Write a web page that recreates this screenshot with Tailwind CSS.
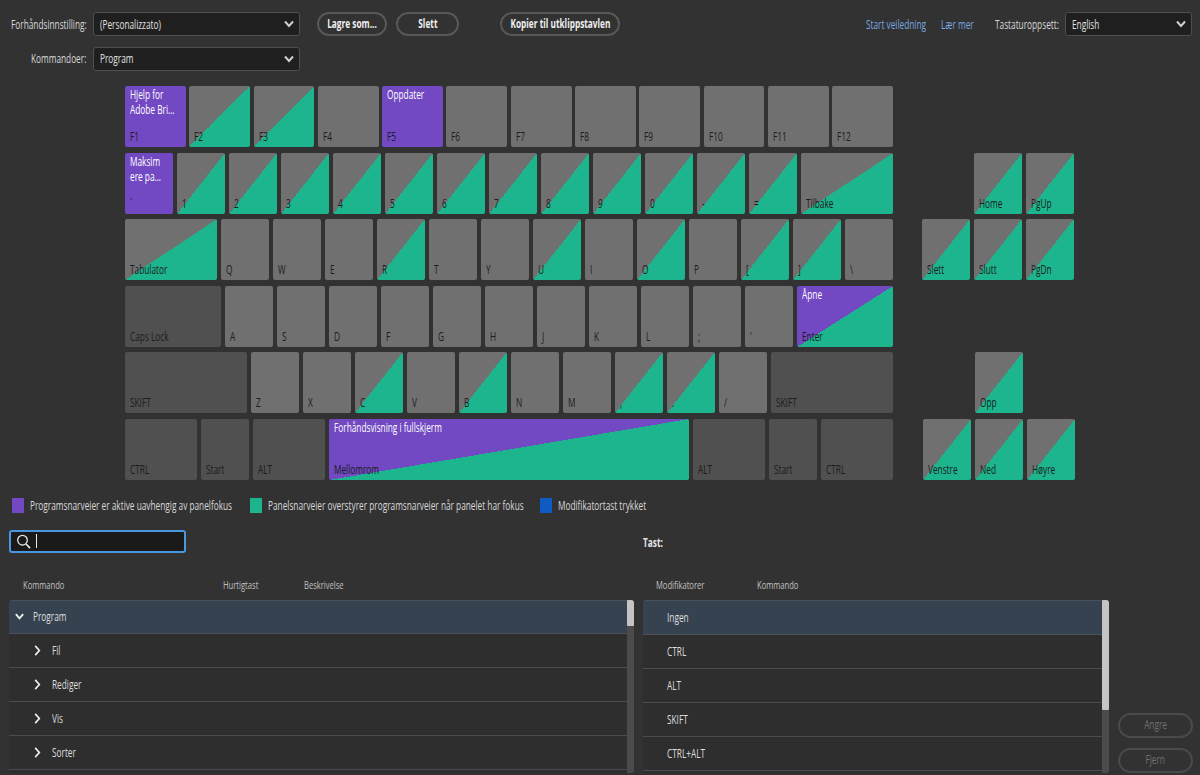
<!DOCTYPE html>
<html lang="no">
<head>
<meta charset="utf-8">
<title>Hurtigtaster</title>
<script src="https://cdn.jsdelivr.net/npm/@tailwindcss/browser@4"></script>
</head>
<body class="bg-[#323232]">
<!-- every label is a span: the UI font is very condensed, so spans get squeezed horizontally here -->
<div class="w-[1200px] h-[775px] overflow-hidden bg-[#323232] pt-3 text-[12px] leading-4 text-[#d8d8d8] font-['Open_Sans',sans-serif] [&_span]:inline-block [&_span]:origin-left [&_span]:scale-x-[.69] [&_span]:whitespace-nowrap">

  <!-- Top controls -->
  <div class="flex items-center h-6">
    <div class="w-[93px] pl-[11px] pt-[2px]"><span>Forhåndsinnstilling:</span></div>
    <div class="w-[207px] h-6 flex items-center justify-between pl-[6px] pr-1 bg-[#1f1f1f] border border-[#4f4f4f] rounded-[3px] text-[#e0e0e0]">
      <span class="mt-[2px]">(Personalizzato)</span>
      <svg class="w-3 h-3" viewBox="0 0 12 12" fill="none" stroke="#d0d0d0" stroke-width="2"><path d="M2 3.5l4 4.5 4-4.5"/></svg>
    </div>
    <button class="ml-[17px] w-[70px] h-6 flex items-center justify-center border-2 border-[#585858] rounded-full font-bold text-[#efefef]"><span class="!origin-center">Lagre som...</span></button>
    <button class="ml-[9px] w-[63px] h-6 flex items-center justify-center border-2 border-[#585858] rounded-full font-bold text-[#efefef]"><span class="!origin-center">Slett</span></button>
    <button class="ml-[41px] w-[120px] h-6 flex items-center justify-center border-2 border-[#585858] rounded-full font-bold text-[#efefef]"><span class="!origin-center">Kopier til utklippstavlen</span></button>
    <div class="ml-[246px] w-[60px] pt-[2px] text-[#78a8e0]"><span>Start veiledning</span></div>
    <div class="ml-[15px] w-[34px] pt-[2px] text-[#78a8e0]"><span>Lær mer</span></div>
    <div class="ml-5 w-[62px] pt-[2px]"><span>Tastaturoppsett:</span></div>
    <div class="ml-2 w-[127px] h-6 flex items-center justify-between pl-[6px] pr-1 bg-[#1f1f1f] border border-[#4f4f4f] rounded-[3px] text-[#e0e0e0]">
      <span class="mt-[2px]">English</span>
      <svg class="w-3 h-3" viewBox="0 0 12 12" fill="none" stroke="#d0d0d0" stroke-width="2"><path d="M2 3.5l4 4.5 4-4.5"/></svg>
    </div>
  </div>
  <div class="flex items-center h-6 mt-[11px]">
    <div class="w-[93px] pl-[31px]"><span>Kommandoer:</span></div>
    <div class="w-[207px] h-6 flex items-center justify-between pl-[6px] pr-1 bg-[#1f1f1f] border border-[#4f4f4f] rounded-[3px] text-[#e0e0e0]">
      <span>Program</span>
      <svg class="w-3 h-3" viewBox="0 0 12 12" fill="none" stroke="#d0d0d0" stroke-width="2"><path d="M2 3.5l4 4.5 4-4.5"/></svg>
    </div>
  </div>

  <!-- Keyboard -->
  <div class="mt-[15px] pl-[125px] flex flex-col gap-[5.6px] text-[#1c1c1c]">
    <div class="flex gap-[3.5px] h-[61px] w-[768px]">
      <div class="w-[60.8px] rounded-[2px] bg-[#7249c2] flex flex-col justify-between px-[5px] pt-[1px] pb-[2px]"><span class="text-white leading-[15px]">Hjelp for<br>Adobe Bri...</span><span>F1</span></div>
      <div class="w-[60.8px] rounded-[2px] bg-[linear-gradient(to_bottom_right,#707070_50%,#1db58e_50%)] flex items-end px-[5px] pb-[2px]"><span>F2</span></div>
      <div class="w-[60.8px] rounded-[2px] bg-[linear-gradient(to_bottom_right,#707070_50%,#1db58e_50%)] flex items-end px-[5px] pb-[2px]"><span>F3</span></div>
      <div class="w-[60.8px] rounded-[2px] bg-[#707070] flex items-end px-[5px] pb-[2px]"><span>F4</span></div>
      <div class="w-[60.8px] rounded-[2px] bg-[#7249c2] flex flex-col justify-between px-[5px] pt-[1px] pb-[2px]"><span class="text-white leading-[15px]">Oppdater</span><span>F5</span></div>
      <div class="w-[60.8px] rounded-[2px] bg-[#707070] flex items-end px-[5px] pb-[2px]"><span>F6</span></div>
      <div class="w-[60.8px] rounded-[2px] bg-[#707070] flex items-end px-[5px] pb-[2px]"><span>F7</span></div>
      <div class="w-[60.8px] rounded-[2px] bg-[#707070] flex items-end px-[5px] pb-[2px]"><span>F8</span></div>
      <div class="w-[60.8px] rounded-[2px] bg-[#707070] flex items-end px-[5px] pb-[2px]"><span>F9</span></div>
      <div class="w-[60.8px] rounded-[2px] bg-[#707070] flex items-end px-[5px] pb-[2px]"><span>F10</span></div>
      <div class="w-[60.8px] rounded-[2px] bg-[#707070] flex items-end px-[5px] pb-[2px]"><span>F11</span></div>
      <div class="w-[60.8px] rounded-[2px] bg-[#707070] flex items-end px-[5px] pb-[2px]"><span>F12</span></div>
    </div>
    <div class="flex gap-1 h-[61px]">
      <div class="w-12 rounded-[2px] bg-[#7249c2] flex flex-col justify-between px-[5px] pt-[1px] pb-[2px]"><span class="text-white leading-[15px]">Maksim<br>ere pa...</span><span>`</span></div>
      <div class="w-12 rounded-[2px] bg-[linear-gradient(to_bottom_right,#707070_50%,#1db58e_50%)] flex items-end px-[5px] pb-[2px]"><span>1</span></div>
      <div class="w-12 rounded-[2px] bg-[linear-gradient(to_bottom_right,#707070_50%,#1db58e_50%)] flex items-end px-[5px] pb-[2px]"><span>2</span></div>
      <div class="w-12 rounded-[2px] bg-[linear-gradient(to_bottom_right,#707070_50%,#1db58e_50%)] flex items-end px-[5px] pb-[2px]"><span>3</span></div>
      <div class="w-12 rounded-[2px] bg-[linear-gradient(to_bottom_right,#707070_50%,#1db58e_50%)] flex items-end px-[5px] pb-[2px]"><span>4</span></div>
      <div class="w-12 rounded-[2px] bg-[linear-gradient(to_bottom_right,#707070_50%,#1db58e_50%)] flex items-end px-[5px] pb-[2px]"><span>5</span></div>
      <div class="w-12 rounded-[2px] bg-[linear-gradient(to_bottom_right,#707070_50%,#1db58e_50%)] flex items-end px-[5px] pb-[2px]"><span>6</span></div>
      <div class="w-12 rounded-[2px] bg-[linear-gradient(to_bottom_right,#707070_50%,#1db58e_50%)] flex items-end px-[5px] pb-[2px]"><span>7</span></div>
      <div class="w-12 rounded-[2px] bg-[linear-gradient(to_bottom_right,#707070_50%,#1db58e_50%)] flex items-end px-[5px] pb-[2px]"><span>8</span></div>
      <div class="w-12 rounded-[2px] bg-[linear-gradient(to_bottom_right,#707070_50%,#1db58e_50%)] flex items-end px-[5px] pb-[2px]"><span>9</span></div>
      <div class="w-12 rounded-[2px] bg-[linear-gradient(to_bottom_right,#707070_50%,#1db58e_50%)] flex items-end px-[5px] pb-[2px]"><span>0</span></div>
      <div class="w-12 rounded-[2px] bg-[linear-gradient(to_bottom_right,#707070_50%,#1db58e_50%)] flex items-end px-[5px] pb-[2px]"><span>-</span></div>
      <div class="w-12 rounded-[2px] bg-[linear-gradient(to_bottom_right,#707070_50%,#1db58e_50%)] flex items-end px-[5px] pb-[2px]"><span>=</span></div>
      <div class="w-[92px] rounded-[2px] bg-[linear-gradient(to_bottom_right,#707070_50%,#1db58e_50%)] flex items-end px-[5px] pb-[2px]"><span>Tilbake</span></div>
      <div class="ml-[77px] w-12 rounded-[2px] bg-[linear-gradient(to_bottom_right,#707070_50%,#1db58e_50%)] flex items-end px-[5px] pb-[2px]"><span>Home</span></div>
      <div class="w-12 rounded-[2px] bg-[linear-gradient(to_bottom_right,#707070_50%,#1db58e_50%)] flex items-end px-[5px] pb-[2px]"><span>PgUp</span></div>
    </div>
    <div class="flex gap-1 h-[61px]">
      <div class="w-[92px] rounded-[2px] bg-[linear-gradient(to_bottom_right,#707070_50%,#1db58e_50%)] flex items-end px-[5px] pb-[2px]"><span>Tabulator</span></div>
      <div class="w-12 rounded-[2px] bg-[#707070] flex items-end px-[5px] pb-[2px]"><span>Q</span></div>
      <div class="w-12 rounded-[2px] bg-[#707070] flex items-end px-[5px] pb-[2px]"><span>W</span></div>
      <div class="w-12 rounded-[2px] bg-[#707070] flex items-end px-[5px] pb-[2px]"><span>E</span></div>
      <div class="w-12 rounded-[2px] bg-[linear-gradient(to_bottom_right,#707070_50%,#1db58e_50%)] flex items-end px-[5px] pb-[2px]"><span>R</span></div>
      <div class="w-12 rounded-[2px] bg-[#707070] flex items-end px-[5px] pb-[2px]"><span>T</span></div>
      <div class="w-12 rounded-[2px] bg-[#707070] flex items-end px-[5px] pb-[2px]"><span>Y</span></div>
      <div class="w-12 rounded-[2px] bg-[linear-gradient(to_bottom_right,#707070_50%,#1db58e_50%)] flex items-end px-[5px] pb-[2px]"><span>U</span></div>
      <div class="w-12 rounded-[2px] bg-[#707070] flex items-end px-[5px] pb-[2px]"><span>I</span></div>
      <div class="w-12 rounded-[2px] bg-[linear-gradient(to_bottom_right,#707070_50%,#1db58e_50%)] flex items-end px-[5px] pb-[2px]"><span>O</span></div>
      <div class="w-12 rounded-[2px] bg-[#707070] flex items-end px-[5px] pb-[2px]"><span>P</span></div>
      <div class="w-12 rounded-[2px] bg-[linear-gradient(to_bottom_right,#707070_50%,#1db58e_50%)] flex items-end px-[5px] pb-[2px]"><span>[</span></div>
      <div class="w-12 rounded-[2px] bg-[linear-gradient(to_bottom_right,#707070_50%,#1db58e_50%)] flex items-end px-[5px] pb-[2px]"><span>]</span></div>
      <div class="w-12 rounded-[2px] bg-[#707070] flex items-end px-[5px] pb-[2px]"><span>\</span></div>
      <div class="ml-[25px] w-12 rounded-[2px] bg-[linear-gradient(to_bottom_right,#707070_50%,#1db58e_50%)] flex items-end px-[5px] pb-[2px]"><span>Slett</span></div>
      <div class="w-12 rounded-[2px] bg-[linear-gradient(to_bottom_right,#707070_50%,#1db58e_50%)] flex items-end px-[5px] pb-[2px]"><span>Slutt</span></div>
      <div class="w-12 rounded-[2px] bg-[linear-gradient(to_bottom_right,#707070_50%,#1db58e_50%)] flex items-end px-[5px] pb-[2px]"><span>PgDn</span></div>
    </div>
    <div class="flex gap-1 h-[61px]">
      <div class="w-24 rounded-[2px] bg-[#505050] flex items-end px-[5px] pb-[2px]"><span>Caps Lock</span></div>
      <div class="w-12 rounded-[2px] bg-[#707070] flex items-end px-[5px] pb-[2px]"><span>A</span></div>
      <div class="w-12 rounded-[2px] bg-[#707070] flex items-end px-[5px] pb-[2px]"><span>S</span></div>
      <div class="w-12 rounded-[2px] bg-[#707070] flex items-end px-[5px] pb-[2px]"><span>D</span></div>
      <div class="w-12 rounded-[2px] bg-[#707070] flex items-end px-[5px] pb-[2px]"><span>F</span></div>
      <div class="w-12 rounded-[2px] bg-[#707070] flex items-end px-[5px] pb-[2px]"><span>G</span></div>
      <div class="w-12 rounded-[2px] bg-[#707070] flex items-end px-[5px] pb-[2px]"><span>H</span></div>
      <div class="w-12 rounded-[2px] bg-[#707070] flex items-end px-[5px] pb-[2px]"><span>J</span></div>
      <div class="w-12 rounded-[2px] bg-[#707070] flex items-end px-[5px] pb-[2px]"><span>K</span></div>
      <div class="w-12 rounded-[2px] bg-[#707070] flex items-end px-[5px] pb-[2px]"><span>L</span></div>
      <div class="w-12 rounded-[2px] bg-[#707070] flex items-end px-[5px] pb-[2px]"><span>;</span></div>
      <div class="w-12 rounded-[2px] bg-[#707070] flex items-end px-[5px] pb-[2px]"><span>'</span></div>
      <div class="w-24 rounded-[2px] bg-[linear-gradient(to_bottom_right,#7249c2_50%,#1db58e_50%)] flex flex-col justify-between px-[5px] pt-[1px] pb-[2px]"><span class="text-white leading-[15px]">Åpne</span><span>Enter</span></div>
    </div>
    <div class="flex gap-1 h-[61px]">
      <div class="w-[122px] rounded-[2px] bg-[#505050] flex items-end px-[5px] pb-[2px]"><span>SKIFT</span></div>
      <div class="w-12 rounded-[2px] bg-[#707070] flex items-end px-[5px] pb-[2px]"><span>Z</span></div>
      <div class="w-12 rounded-[2px] bg-[#707070] flex items-end px-[5px] pb-[2px]"><span>X</span></div>
      <div class="w-12 rounded-[2px] bg-[linear-gradient(to_bottom_right,#707070_50%,#1db58e_50%)] flex items-end px-[5px] pb-[2px]"><span>C</span></div>
      <div class="w-12 rounded-[2px] bg-[#707070] flex items-end px-[5px] pb-[2px]"><span>V</span></div>
      <div class="w-12 rounded-[2px] bg-[linear-gradient(to_bottom_right,#707070_50%,#1db58e_50%)] flex items-end px-[5px] pb-[2px]"><span>B</span></div>
      <div class="w-12 rounded-[2px] bg-[#707070] flex items-end px-[5px] pb-[2px]"><span>N</span></div>
      <div class="w-12 rounded-[2px] bg-[#707070] flex items-end px-[5px] pb-[2px]"><span>M</span></div>
      <div class="w-12 rounded-[2px] bg-[linear-gradient(to_bottom_right,#707070_50%,#1db58e_50%)] flex items-end px-[5px] pb-[2px]"><span>,</span></div>
      <div class="w-12 rounded-[2px] bg-[linear-gradient(to_bottom_right,#707070_50%,#1db58e_50%)] flex items-end px-[5px] pb-[2px]"><span>.</span></div>
      <div class="w-12 rounded-[2px] bg-[#707070] flex items-end px-[5px] pb-[2px]"><span>/</span></div>
      <div class="w-[122px] rounded-[2px] bg-[#505050] flex items-end px-[5px] pb-[2px]"><span>SKIFT</span></div>
      <div class="ml-[78px] w-12 rounded-[2px] bg-[linear-gradient(to_bottom_right,#707070_50%,#1db58e_50%)] flex items-end px-[5px] pb-[2px]"><span>Opp</span></div>
    </div>
    <div class="flex gap-1 h-[61px]">
      <div class="w-[72px] rounded-[2px] bg-[#505050] flex items-end px-[5px] pb-[2px]"><span>CTRL</span></div>
      <div class="w-12 rounded-[2px] bg-[#505050] flex items-end px-[5px] pb-[2px]"><span>Start</span></div>
      <div class="w-[72px] rounded-[2px] bg-[#505050] flex items-end px-[5px] pb-[2px]"><span>ALT</span></div>
      <div class="w-[360px] rounded-[2px] bg-[linear-gradient(to_bottom_right,#7249c2_50%,#1db58e_50%)] flex flex-col justify-between px-[5px] pt-[1px] pb-[2px]"><span class="text-white leading-[15px]">Forhåndsvisning i fullskjerm</span><span>Mellomrom</span></div>
      <div class="w-[72px] rounded-[2px] bg-[#505050] flex items-end px-[5px] pb-[2px]"><span>ALT</span></div>
      <div class="w-12 rounded-[2px] bg-[#505050] flex items-end px-[5px] pb-[2px]"><span>Start</span></div>
      <div class="w-[72px] rounded-[2px] bg-[#505050] flex items-end px-[5px] pb-[2px]"><span>CTRL</span></div>
      <div class="ml-[26px] w-12 rounded-[2px] bg-[linear-gradient(to_bottom_right,#707070_50%,#1db58e_50%)] flex items-end px-[5px] pb-[2px]"><span>Venstre</span></div>
      <div class="w-12 rounded-[2px] bg-[linear-gradient(to_bottom_right,#707070_50%,#1db58e_50%)] flex items-end px-[5px] pb-[2px]"><span>Ned</span></div>
      <div class="w-12 rounded-[2px] bg-[linear-gradient(to_bottom_right,#707070_50%,#1db58e_50%)] flex items-end px-[5px] pb-[2px]"><span>Høyre</span></div>
    </div>
  </div>

  <!-- Legend -->
  <div class="mt-[18px] pl-3 flex items-center h-[15px]">
    <div class="w-3 h-[15px] bg-[#7249c2]"></div>
    <div class="ml-[6px] w-[203px] mt-[2px]"><span>Programsnarveier er aktive uavhengig av panelfokus</span></div>
    <div class="ml-[17px] w-3 h-[15px] bg-[#1db58e]"></div>
    <div class="ml-[6px] w-[255px] mt-[2px]"><span>Panelsnarveier overstyrer programsnarveier når panelet har fokus</span></div>
    <div class="ml-[17px] w-3 h-[15px] bg-[#0f5bc4]"></div>
    <div class="ml-[6px] mt-[2px]"><span>Modifikatortast trykket</span></div>
  </div>

  <!-- Search -->
  <div class="mt-[17px] pl-[9px] flex items-center h-[23px]">
    <div class="w-[177px] h-[23px] flex items-center gap-[5px] px-[5px] bg-[#1a1a1a] border-2 border-[#4a97e0] rounded-[3px]">
      <svg class="w-[15px] h-[15px]" viewBox="0 0 15 15" fill="none" stroke="#e8e8e8" stroke-width="1.3"><circle cx="6.5" cy="6.2" r="4.8"/><path d="M10 10l4 4.2" stroke-width="1.7"/></svg>
      <div class="w-px h-[14px] bg-[#e8e8e8]"></div>
    </div>
    <div class="ml-[457px] mt-[3px] font-bold text-[#e4e4e4]"><span>Tast:</span></div>
  </div>

  <!-- Column headers -->
  <div class="mt-[24px] flex h-4 text-[#c0c0c0] text-[11px]">
    <div class="ml-[23px] w-[200px]"><span>Kommando</span></div>
    <div class="w-[81px]"><span>Hurtigtast</span></div>
    <div class="w-[352px]"><span>Beskrivelse</span></div>
    <div class="w-[101px]"><span>Modifikatorer</span></div>
    <div><span>Kommando</span></div>
  </div>

  <!-- Lists -->
  <div class="mt-[7px] flex items-start">
    <div class="ml-[9px] w-[625px] h-[173px] flex overflow-hidden rounded-[3px] bg-[#2e2e2e] text-[#dedede]">
      <div class="flex-1 border-t border-[#47525c]">
        <div class="h-[33px] flex items-center bg-[#36424f] border-b border-[#4a525a]">
          <svg class="ml-[5px] w-[11px] h-[11px]" viewBox="0 0 12 12" fill="none" stroke="#f0f0f0" stroke-width="2"><path d="M2 3.5l4 4.5 4-4.5"/></svg>
          <span class="ml-[8px] mt-[1px]">Program</span>
        </div>
        <div class="h-[34px] flex items-center border-b border-[#4c4c4c]">
          <svg class="ml-[23px] w-[11px] h-[11px]" viewBox="0 0 12 12" fill="none" stroke="#f0f0f0" stroke-width="1.8"><path d="M3.5 1l4.5 5-4.5 5"/></svg>
          <span class="ml-[9px] mt-[2px]">Fil</span>
        </div>
        <div class="h-[34px] flex items-center border-b border-[#4c4c4c]">
          <svg class="ml-[23px] w-[11px] h-[11px]" viewBox="0 0 12 12" fill="none" stroke="#f0f0f0" stroke-width="1.8"><path d="M3.5 1l4.5 5-4.5 5"/></svg>
          <span class="ml-[9px] mt-[2px]">Rediger</span>
        </div>
        <div class="h-[34px] flex items-center border-b border-[#4c4c4c]">
          <svg class="ml-[23px] w-[11px] h-[11px]" viewBox="0 0 12 12" fill="none" stroke="#f0f0f0" stroke-width="1.8"><path d="M3.5 1l4.5 5-4.5 5"/></svg>
          <span class="ml-[9px] mt-[2px]">Vis</span>
        </div>
        <div class="h-[34px] flex items-center border-b border-[#4c4c4c]">
          <svg class="ml-[23px] w-[11px] h-[11px]" viewBox="0 0 12 12" fill="none" stroke="#f0f0f0" stroke-width="1.8"><path d="M3.5 1l4.5 5-4.5 5"/></svg>
          <span class="ml-[9px] mt-[2px]">Sorter</span>
        </div>
      </div>
      <div class="w-[7px] bg-[#4b4b4b]"><div class="h-[26px] bg-[#c4c4c4] rounded-[1px]"></div></div>
    </div>

    <div class="ml-[9px] w-[466px] h-[173px] flex overflow-hidden rounded-[3px] bg-[#2e2e2e] text-[#dedede]">
      <div class="flex-1 border-t border-[#47525c]">
        <div class="h-[34px] flex items-center pl-6 pt-[2px] bg-[#36424f] border-b border-[#4a525a]"><span>Ingen</span></div>
        <div class="h-[34px] flex items-center pl-6 pt-[2px] border-b border-[#4c4c4c]"><span>CTRL</span></div>
        <div class="h-[34px] flex items-center pl-6 pt-[2px] border-b border-[#4c4c4c]"><span>ALT</span></div>
        <div class="h-[34px] flex items-center pl-6 pt-[2px] border-b border-[#4c4c4c]"><span>SKIFT</span></div>
        <div class="h-[34px] flex items-center pl-6 pt-[2px] border-b border-[#4c4c4c]"><span>CTRL+ALT</span></div>
      </div>
      <div class="w-[7px] bg-[#4b4b4b]"><div class="h-[110px] bg-[#c4c4c4] rounded-[1px]"></div></div>
    </div>

    <div class="ml-[9px] mt-[113px] flex flex-col gap-[10px] text-[#707070]">
      <button class="w-[75px] h-[25px] flex items-center justify-center border-2 border-[#4a4a4a] rounded-full"><span class="!origin-center">Angre</span></button>
      <button class="w-[75px] h-[25px] flex items-center justify-center border-2 border-[#4a4a4a] rounded-full"><span class="!origin-center">Fjern</span></button>
    </div>
  </div>
</div>
</body>
</html>
